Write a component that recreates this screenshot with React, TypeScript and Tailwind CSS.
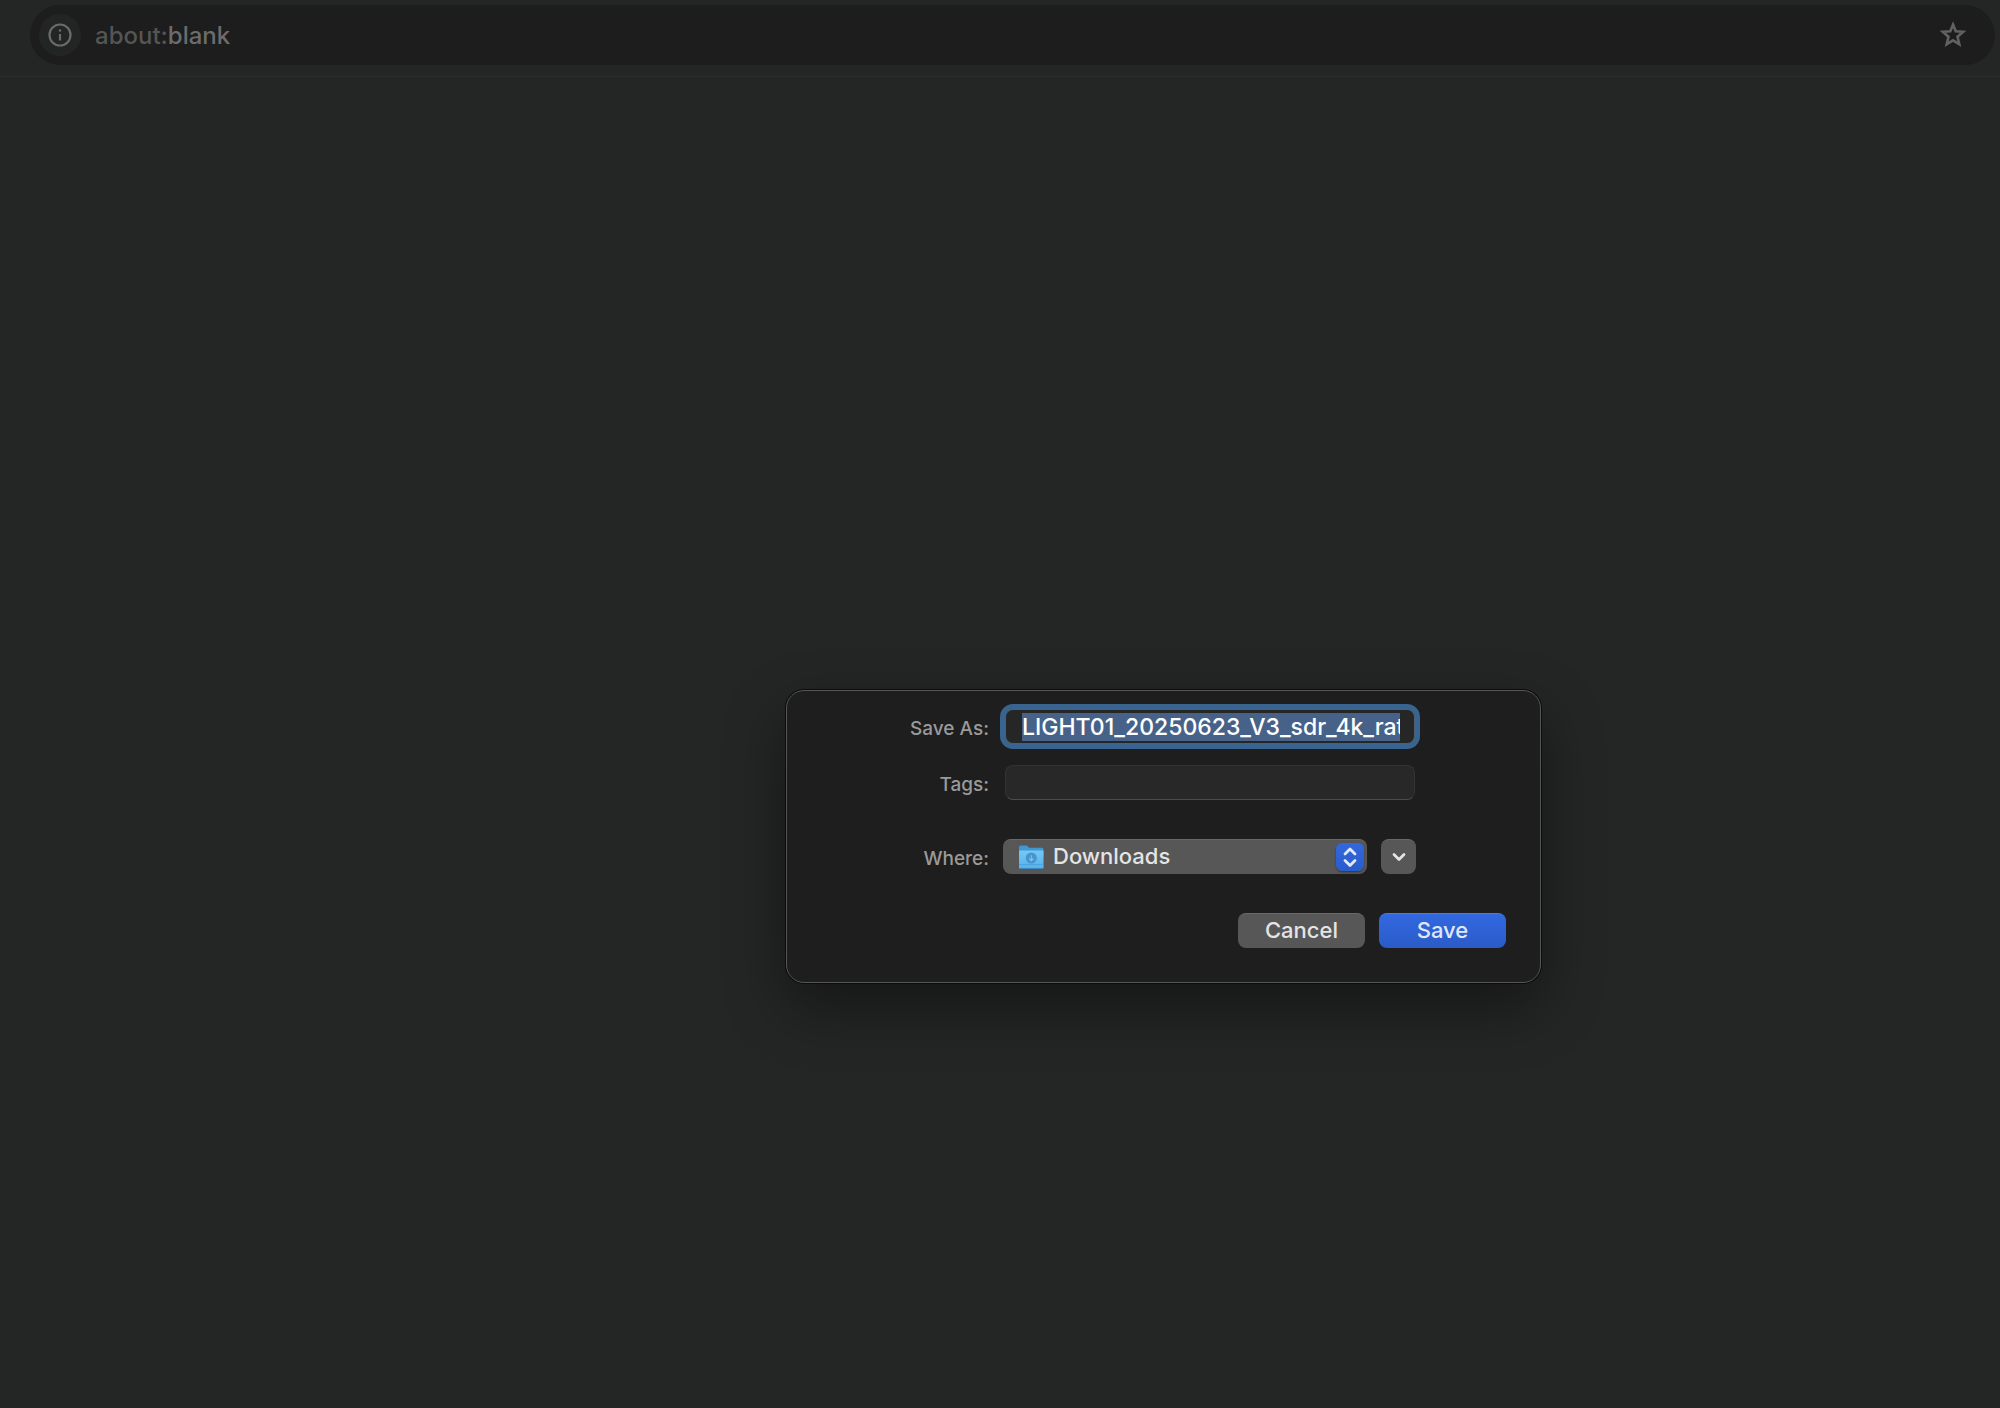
import { useEffect, useRef, type ComponentProps, type ReactNode } from "react"
import { clsx } from "clsx"

function InfoIcon() {
  return (
    <svg viewBox="0 0 24 24" className="size-6" fill="none" stroke="currentColor">
      <circle cx="12" cy="12" r="10.500" strokeWidth="2.2" />
      <path d="M12 11 V17.500" strokeWidth="2.200" />
      <circle cx="12" cy="7.500" r="1.300" fill="currentColor" stroke="none" />
    </svg>
  )
}

function StarIcon() {
  return (
    <svg viewBox="0 0 28 27" className="h-[27px] w-7" fill="none" stroke="currentColor" strokeWidth="2.6">
      <path d="M14 3.600 L16.700 10.200 L24.200 10.800 L18.500 15.700 L20.300 23.200 L14 19.300 L7.700 23.200 L9.500 15.700 L3.800 10.800 L11.300 10.200 Z" />
    </svg>
  )
}

function DownloadsFolderIcon() {
  return (
    <svg viewBox="0 0 26 25" className="pointer-events-none absolute top-[6px] left-[15px] h-[25px] w-[26px]">
      <defs>
        <linearGradient id="folder" x1="0" y1="0" x2="0" y2="1">
          <stop offset="0" stopColor="#76c8f5" />
          <stop offset="1" stopColor="#56b0e8" />
        </linearGradient>
      </defs>
      <path d="M1 2 Q1 .5 2.5 .5 H8 Q9 .5 9.700 1.300 L10.500 2.300 Q11 2.800 12 2.800 H24 Q25.500 2.800 25.500 4.300 V12 H1 Z" fill="#3f98d4" />
      <path d="M1 6.500 Q1 5.500 2 5.500 H24.500 Q25.500 5.500 25.500 6.500 V22.500 Q25.500 24 24 24 H2.500 Q1 24 1 22.500 Z" fill="url(#folder)" />
      <path d="M1 19.500 H25.500" stroke="#4aa0d8" strokeWidth=".8" />
      <path d="M1.500 23.500 H25" stroke="#3b88bd" strokeWidth="1" />
      <circle cx="13.300" cy="13" r="5.500" fill="#4795cf" />
      <path d="M13.300 10.200 V15.400 M11.200 13.500 L13.300 15.600 L15.400 13.500" fill="none" stroke="#7cc4ef" strokeWidth="1.100" />
    </svg>
  )
}

function UpDownIcon() {
  return (
    <svg viewBox="0 0 28 28" className="size-7" fill="none" stroke="currentColor" strokeWidth="2.8" strokeLinecap="round" strokeLinejoin="round">
      <path d="M9 11 L14 6 L19 11" />
      <path d="M9 17.500 L14 22.500 L19 17.500" />
    </svg>
  )
}

function DisclosureIcon() {
  return (
    <svg viewBox="0 0 36 36" className="size-9 shrink-0" fill="none" stroke="currentColor" strokeWidth="2.8" strokeLinecap="round" strokeLinejoin="round">
      <path d="M13 16.500 L18 21.500 L23 16.500" />
    </svg>
  )
}

function AddressBar() {
  return (
    <header className="border-b border-[#2a2c2b] pt-[5px] pr-[5px] pb-[11px] pl-[30px]">
      <div className="flex h-[60px] items-center rounded-full bg-[#1d1d1d] pr-7 pl-[9px]">
        <button
          type="button"
          aria-label="View site information"
          className="flex size-[42px] items-center justify-center rounded-full bg-[#232524] text-[#6a6a6a]"
        >
          <InfoIcon />
        </button>
        <div className="ml-[14px] flex-1 pt-0.5 text-2xl font-medium text-[#555555]">
          about:<span className="text-[#6c6c6c]">blank</span>
        </div>
        <button type="button" aria-label="Bookmark this tab" className="pb-0.5 text-[#626262]">
          <StarIcon />
        </button>
      </div>
    </header>
  )
}

function FieldLabel({ htmlFor, children }: { htmlFor: string; children: ReactNode }) {
  return (
    <label htmlFor={htmlFor} className="w-[202px] pt-1 text-right text-[19px] leading-7 font-medium text-[#9a9a9a]">
      {children}
    </label>
  )
}

function PushButton({ className, ...props }: ComponentProps<"button">) {
  return (
    <button
      className={clsx(
        "flex h-[35px] items-center justify-center rounded-lg border-t pb-0.5 text-[22px] leading-7 font-medium",
        className
      )}
      {...props}
    />
  )
}

function FilenameInput() {
  const ref = useRef<HTMLInputElement>(null)

  // select the whole name but keep its start in view
  useEffect(() => {
    const input = ref.current
    if (!input) return
    input.focus()
    input.setSelectionRange(0, input.value.length, "backward")
    input.scrollLeft = 0
    const frame = requestAnimationFrame(() => {
      input.scrollLeft = 0
    })
    return () => cancelAnimationFrame(frame)
  }, [])

  return (
    <input
      ref={ref}
      id="filename"
      type="text"
      defaultValue="LIGHT01_20250623_V3_sdr_4k_rate"
      className="h-7 w-full bg-transparent text-[23px] leading-7 font-medium text-white outline-none selection:bg-[#47628afe] selection:text-white"
    />
  )
}

function SaveDialog() {
  return (
    <form
      role="dialog"
      aria-label="Save As"
      onSubmit={(e) => e.preventDefault()}
      className="rounded-[18px] border border-[#565656] bg-[#1e1e1e] pt-[18px] pr-[34px] pb-[34px] shadow-[0_0_0_1px_#0c0c0c,0_24px_60px_0_rgba(0,0,0,0.42)]"
    >
      <div className="flex items-center gap-4">
        <FieldLabel htmlFor="filename">Save As:</FieldLabel>
        <div className="flex h-[35px] w-[410px] items-center rounded-lg border border-[#4b6070] bg-[#262626] pr-[14px] pl-4 ring-[5px] ring-[#38648f]">
          <FilenameInput />
        </div>
      </div>

      <div className="mt-[21px] flex items-center gap-4">
        <FieldLabel htmlFor="tags">Tags:</FieldLabel>
        <input
          id="tags"
          type="text"
          className="h-[35px] w-[410px] rounded-lg border border-[#333333] border-b-[#4c4c4c] bg-[#282828] px-4 text-[22px] font-medium text-white outline-none"
        />
      </div>

      <div className="mt-[39px] flex items-center gap-[14px]">
        <FieldLabel htmlFor="where">Where:</FieldLabel>
        <div className="relative">
          <select
            id="where"
            className="block h-[35px] w-[364px] appearance-none rounded-lg border-t border-[#686868] bg-[#575757] pb-0.5 pl-[50px] text-[22px] leading-7 font-medium text-[#e4e4e4] outline-none"
          >
            <option>Downloads</option>
          </select>
          <DownloadsFolderIcon />
          <span className="pointer-events-none absolute top-1 right-[3px] rounded-md bg-linear-to-b from-[#3268e0] to-[#2a5cca] text-[#e2e9f8] shadow-[0_1px_2px_rgba(0,0,0,0.4)]">
            <UpDownIcon />
          </span>
        </div>
        <PushButton type="button" aria-label="Show more options" className="w-[35px] border-[#686868] bg-[#575757] text-[#e4e4e4]">
          <DisclosureIcon />
        </PushButton>
      </div>

      <div className="mt-[39px] flex justify-end gap-[14px]">
        <PushButton type="button" className="w-[127px] border-[#686868] bg-[#575757] text-[#e4e4e4]">
          Cancel
        </PushButton>
        <PushButton
          type="submit"
          className="w-[127px] border-[#4a7ae4] bg-linear-to-b from-[#3268e0] to-[#2a5bc8] text-[#dfe7f9]"
        >
          Save
        </PushButton>
      </div>
    </form>
  )
}

export default function App() {
  return (
    <div className="min-h-screen bg-[#242625] font-['Inter','Liberation_Sans',sans-serif]">
      <AddressBar />
      <main className="grid grid-cols-[786fr_755px_459fr] pt-[613px]">
        <div className="col-start-2">
          <SaveDialog />
        </div>
      </main>
    </div>
  )
}
